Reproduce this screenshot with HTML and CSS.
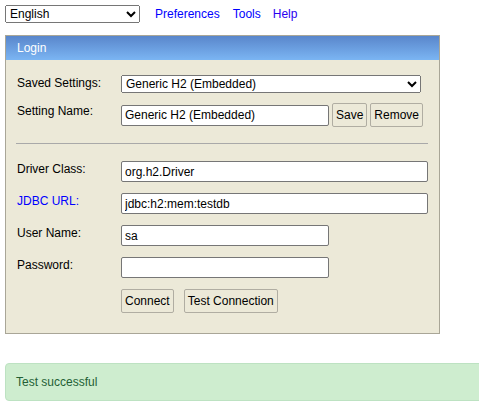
FILE: index.html
```html
<!DOCTYPE html>
<html>
<head>
<meta charset="utf-8">
<title>H2 Console</title>
<link rel="stylesheet" href="styles.css">
</head>
<body>
<div class="topbar">
  <select class="lang"><option>English</option></select>
  <a class="nav nav-first" href="#">Preferences</a>
  <a class="nav nav-tools" href="#">Tools</a>
  <a class="nav nav-help" href="#">Help</a>
</div>

<div class="panel">
  <div class="panel-head">Login</div>
  <div class="panel-body">
    <div class="row row-first">
      <span class="label">Saved Settings:</span>
      <select class="saved"><option>Generic H2 (Embedded)</option></select>
    </div>
    <div class="row row-btns">
      <span class="label">Setting Name:</span>
      <input class="field short" type="text" value="Generic H2 (Embedded)">
      <button class="btn btn-save">Save</button>
      <button class="btn btn-remove">Remove</button>
    </div>
    <div class="sep"></div>
    <div class="row">
      <span class="label">Driver Class:</span>
      <input class="field long" type="text" value="org.h2.Driver">
    </div>
    <div class="row">
      <span class="label link-label">JDBC URL:</span>
      <input class="field long" type="text" value="jdbc:h2:mem:testdb">
    </div>
    <div class="row">
      <span class="label">User Name:</span>
      <input class="field short" type="text" value="sa">
    </div>
    <div class="row">
      <span class="label">Password:</span>
      <input class="field short" type="password" value="">
    </div>
    <div class="row actions">
      <span class="label"></span>
      <button class="btn">Connect</button>
      <button class="btn btn-test">Test Connection</button>
    </div>
  </div>
</div>

<div class="alert">Test successful</div>
</body>
</html>
```

FILE: styles.css
```css
html, body {
  margin: 0;
  padding: 0;
  overflow-x: hidden;
  background: #ffffff;
}
body {
  padding: 5px;
  font-family: "Liberation Sans", Arial, sans-serif;
  font-size: 12px;
  color: #000;
}
.topbar {
  display: flex;
  align-items: center;
  height: 18px;
}
.lang {
  width: 135px;
  height: 18px;
  font-family: "Liberation Sans", Arial, sans-serif;
  font-size: 12px;
  margin: 0;
}
.nav {
  color: #0000ff;
  text-decoration: none;
  line-height: 14px;
}
.nav-first { margin-left: 15px; }
.nav-tools { margin-left: 13px; }
.nav-help { margin-left: 12px; color: #2a00f0; }

.panel {
  margin-top: 12px;
  width: 433px;
  border: 1px solid #a9a697;
  background: #ece9d8;
}
.panel-head {
  height: 24px;
  line-height: 24px;
  padding-left: 11px;
  color: #ffffff;
  background: linear-gradient(#5986cb, #7bb5f3);
}
.panel-body {
  padding: 15px 11px 20px 11px;
}
.row {
  display: flex;
  align-items: flex-start;
  margin-bottom: 11px;
}
.row.row-first { margin-bottom: 10px; }
.row.actions { margin-bottom: 0; }
.row-btns { align-items: center; }
.row-btns .label { align-self: flex-start; }
.label {
  width: 104px;
  flex: none;
  line-height: 14px;
  padding-top: 1px;
}
.link-label { color: #0000ff; }
.saved {
  width: 300px;
  height: 18px;
  margin: 0;
  font-family: "Liberation Sans", Arial, sans-serif;
  font-size: 12px;
}
.field {
  box-sizing: border-box;
  height: 21px;
  margin: 0;
  padding: 0 3px;
  border: 1px solid #767676;
  border-radius: 2px;
  background: #fff;
  font-family: "Liberation Sans", Arial, sans-serif;
  font-size: 12px;
  color: #000;
}
.field.short { width: 208px; }
.field.long { width: 307px; }
.btn {
  box-sizing: border-box;
  height: 24px;
  margin: 0;
  padding: 0 3px;
  border: 1px solid #b0ada2;
  border-radius: 2px;
  background: #ece9d8;
  font-family: "Liberation Sans", Arial, sans-serif;
  font-size: 12px;
  color: #000;
}
.btn-save { margin-left: 3px; }
.btn-remove { margin-left: 3px; }
.btn-test { margin-left: 10px; }
.sep {
  height: 0;
  border-top: 1px solid #a9a9a9;
  margin: 16px 0 17px -1px;
}
.alert {
  margin-top: 29px;
  width: calc(100% + 20px);
  box-sizing: border-box;
  height: 38px;
  line-height: 36px;
  padding-left: 10px;
  border: 1px solid #bde2c2;
  border-radius: 4px;
  background: #ceedcf;
  color: #245f35;
}
```
